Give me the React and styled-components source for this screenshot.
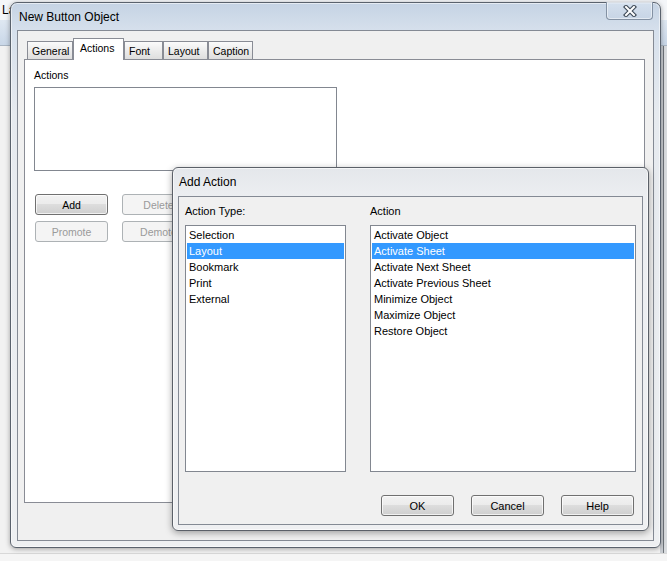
import React from "react";
import styled, { createGlobalStyle } from "styled-components";

const GlobalStyle = createGlobalStyle`
  html, body { margin: 0; padding: 0; }
  body { font-family: "Liberation Sans", Arial, sans-serif; color: #000; }
  * { box-sizing: border-box; }
`;

const Desktop = styled.div`
  position: relative;
  width: 667px;
  height: 561px;
  overflow: hidden;
`;

const BackgroundApp = styled.div`
  display: flex;
  flex-direction: column;
  height: 100%;
  background: #eceef1;
`;

const AppMenuBar = styled.div`
  display: flex;
  gap: 14px;
  height: 20px;
  align-items: center;
  padding-left: 2px;
  font-size: 12px;
  background: #f4f6f9;
`;

const AppToolbar = styled.div`
  height: 26px;
  background: linear-gradient(#dfe8f2, #c9d7e8);
  border-bottom: 1px solid #aab6c4;
`;

const AppWorkspace = styled.div`
  flex: 1;
  background: linear-gradient(90deg, #f2f2f2 0 660px, #c9cdd2 660px 663px, #6f747a 663px 664px, #d9dcdf 664px);
`;

const AppStatusBar = styled.div`
  height: 8px;
  border-top: 1px solid #d8d8d8;
  background: #f5f5f5;
`;

const MainWindow = styled.div`
  position: absolute;
  left: 10px;
  top: 2px;
  width: 651px;
  height: 546px;
  display: flex;
  flex-direction: column;
  padding: 0 6px 6px 6px;
  border: 1px solid #5a626d;
  border-radius: 7px 7px 6px 6px;
  background: linear-gradient(#c5d3e4 0px, #d6e0ec 28px, #e6eaef 110px, #eef0f2 100%);
  box-shadow: 0 1px 5px rgba(0, 0, 0, 0.35), inset 0 0 0 1px rgba(255, 255, 255, 0.55);
`;

const TitleBar = styled.div`
  display: flex;
  align-items: flex-start;
  justify-content: space-between;
  height: ${(p) => p.$height}px;
  padding-left: ${(p) => p.$padLeft}px;
`;

const TitleText = styled.span`
  align-self: center;
  font-size: 12px;
  line-height: 14px;
  color: #000;
  white-space: nowrap;
`;

const CloseButton = styled.div`
  display: flex;
  align-items: center;
  justify-content: center;
  width: 47px;
  height: 18px;
  margin-top: -1px;
  margin-right: 1px;
  border: 1px solid #8391a3;
  border-top: none;
  border-radius: 0 0 4px 4px;
  background: linear-gradient(rgba(220, 230, 242, 0.7), rgba(196, 210, 228, 0.7));
  box-shadow: inset 0 0 0 1px rgba(255, 255, 255, 0.5);
`;

const Client = styled.div`
  flex: 1;
  display: flex;
  flex-direction: column;
  border: 1px solid #848a94;
  background: #f0f0f0;
  padding: ${(p) => p.$pad};
`;

const TabStrip = styled.div`
  position: relative;
  z-index: 1;
  display: flex;
  align-items: flex-end;
  height: 21px;
  padding-left: 3px;
`;

const Tab = styled.div`
  width: ${(p) => p.$w}px;
  height: ${(p) => (p.$active ? 22 : 18)}px;
  margin-bottom: ${(p) => (p.$active ? -1 : 0)}px;
  padding-left: ${(p) => (p.$active ? 6 : 4)}px;
  padding-top: ${(p) => (p.$active ? 2 : 2)}px;
  border: 1px solid #898c95;
  border-bottom: none;
  background: ${(p) => (p.$active ? "#ffffff" : "linear-gradient(#fbfbfb, #ececec 50%, #dedede)")};
  font-size: 10.5px;
  line-height: 14px;
  white-space: nowrap;
`;

const Panel = styled.div`
  flex: 1;
  display: flex;
  flex-direction: column;
  align-items: flex-start;
  background: #fff;
  border: 1px solid #898c95;
  padding: 8px 9px;
`;

const FieldLabel = styled.div`
  font-size: ${(p) => p.$size}px;
  line-height: 14px;
  white-space: nowrap;
`;

const ListBox = styled.div`
  width: ${(p) => p.$w}px;
  height: ${(p) => p.$h}px;
  margin-top: ${(p) => p.$mt}px;
  border: 1px solid #828790;
  background: #fff;
  padding: 1px;
  overflow: hidden;
`;

const ListItem = styled.div`
  height: 16px;
  line-height: 16px;
  padding-left: 2px;
  font-size: 11px;
  white-space: nowrap;
  background: ${(p) => (p.$selected ? "#3399ff" : "transparent")};
  color: ${(p) => (p.$selected ? "#fff" : "#000")};
`;

const ButtonGrid = styled.div`
  display: grid;
  grid-template-columns: 73px 73px;
  column-gap: 14px;
  row-gap: 6px;
  margin-top: 23px;
  margin-left: 1px;
`;

const Button = styled.div`
  display: flex;
  align-items: center;
  justify-content: center;
  width: 73px;
  height: 21px;
  border: 1px solid ${(p) => (p.$disabled ? "#adb2b5" : "#707070")};
  border-radius: 3px;
  background: ${(p) =>
    p.$disabled
      ? "#f4f4f4"
      : "linear-gradient(#f2f2f2 0%, #ebebeb 50%, #dddddd 50%, #cfcfcf 100%)"};
  box-shadow: ${(p) => (p.$disabled ? "none" : "inset 0 0 0 1px rgba(255,255,255,0.7)")};
  color: ${(p) => (p.$disabled ? "#9a9a9a" : "#000")};
  font-size: ${(p) => p.$size || 10.5}px;
  white-space: nowrap;
`;

const Dialog = styled.div`
  position: absolute;
  left: 172px;
  top: 167px;
  width: 477px;
  height: 364px;
  display: flex;
  flex-direction: column;
  padding: 0 5px 5px 5px;
  border: 1px solid #5b6068;
  border-radius: 6px;
  background: linear-gradient(#e4e7eb 0px, #eceef1 28px, #eff0f2 100%);
  box-shadow: 0 2px 7px rgba(0, 0, 0, 0.35), inset 0 0 0 1px rgba(255, 255, 255, 0.6);
`;

const Columns = styled.div`
  display: flex;
  gap: 24px;
`;

const Column = styled.div`
  display: flex;
  flex-direction: column;
`;

const DialogButtons = styled.div`
  display: flex;
  justify-content: flex-end;
  gap: 17px;
  margin-top: 23px;
  margin-right: 2px;
`;

const CloseGlyph = () => (
  <svg width="14" height="12" viewBox="0 0 14 12">
    <path d="M3 2 L11 10 M11 2 L3 10" stroke="#3d4957" strokeWidth="4.2" strokeLinecap="square" fill="none" />
    <path d="M3 2 L11 10 M11 2 L3 10" stroke="#ffffff" strokeWidth="2" strokeLinecap="square" fill="none" />
  </svg>
);

const tabs = [
  { label: "General", w: 46 },
  { label: "Actions", w: 51, active: true },
  { label: "Font", w: 39 },
  { label: "Layout", w: 45 },
  { label: "Caption", w: 45 },
];

const actionTypes = ["Selection", "Layout", "Bookmark", "Print", "External"];
const actions = [
  "Activate Object",
  "Activate Sheet",
  "Activate Next Sheet",
  "Activate Previous Sheet",
  "Minimize Object",
  "Maximize Object",
  "Restore Object",
];

export default function App() {
  return (
    <>
      <GlobalStyle />
      <Desktop>
        <BackgroundApp>
          <AppMenuBar>
            <span>La</span>
          </AppMenuBar>
          <AppToolbar />
          <AppWorkspace />
          <AppStatusBar />
        </BackgroundApp>

        <MainWindow>
          <TitleBar $height={27} $padLeft={2}>
            <TitleText>New Button Object</TitleText>
            <CloseButton>
              <CloseGlyph />
            </CloseButton>
          </TitleBar>
          <Client $pad="7px 8px 37px 6px">
            <TabStrip>
              {tabs.map((t) => (
                <Tab key={t.label} $w={t.w} $active={t.active}>
                  {t.label}
                </Tab>
              ))}
            </TabStrip>
            <Panel>
              <FieldLabel $size={10.5}>Actions</FieldLabel>
              <ListBox $w={303} $h={84} $mt={5} />
              <ButtonGrid>
                <Button>Add</Button>
                <Button $disabled>Delete</Button>
                <Button $disabled>Promote</Button>
                <Button $disabled>Demote</Button>
              </ButtonGrid>
            </Panel>
          </Client>
        </MainWindow>

        <Dialog>
          <TitleBar $height={28} $padLeft={1}>
            <TitleText>Add Action</TitleText>
          </TitleBar>
          <Client $pad="7px 6px 8px 6px">
            <Columns>
              <Column>
                <FieldLabel $size={11}>Action Type:</FieldLabel>
                <ListBox $w={161} $h={247} $mt={7}>
                  {actionTypes.map((a) => (
                    <ListItem key={a} $selected={a === "Layout"}>
                      {a}
                    </ListItem>
                  ))}
                </ListBox>
              </Column>
              <Column>
                <FieldLabel $size={11}>Action</FieldLabel>
                <ListBox $w={266} $h={247} $mt={7}>
                  {actions.map((a) => (
                    <ListItem key={a} $selected={a === "Activate Sheet"}>
                      {a}
                    </ListItem>
                  ))}
                </ListBox>
              </Column>
            </Columns>
            <DialogButtons>
              <Button $size={11}>OK</Button>
              <Button $size={11}>Cancel</Button>
              <Button $size={11}>Help</Button>
            </DialogButtons>
          </Client>
        </Dialog>
      </Desktop>
    </>
  );
}
